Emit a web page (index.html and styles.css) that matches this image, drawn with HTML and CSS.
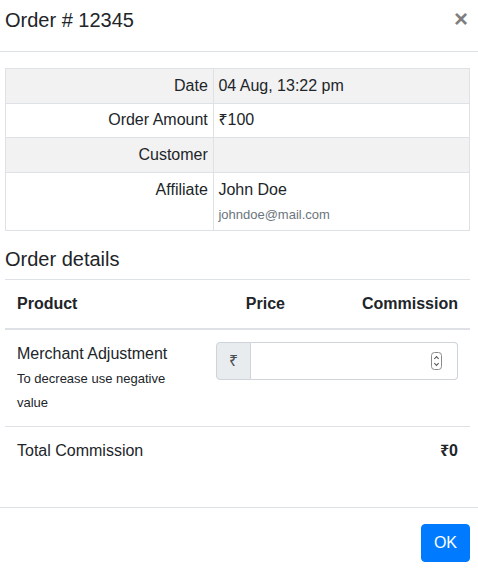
FILE: index.html
```html
<!DOCTYPE html>
<html>
<head>
<meta charset="utf-8">
<link rel="stylesheet" href="styles.css">
</head>
<body>
<div class="modal">
  <div class="modal-header">
    <h5 class="modal-title">Order # 12345</h5>
    <span class="close">×</span>
  </div>
  <div class="modal-body">
    <table class="info-table">
      <tr class="striped"><td class="label">Date</td><td>04 Aug, 13:22 pm</td></tr>
      <tr><td class="label">Order Amount</td><td>₹100</td></tr>
      <tr class="striped"><td class="label">Customer</td><td></td></tr>
      <tr><td class="label">Affiliate</td><td><div>John Doe</div><div><small class="muted">johndoe@mail.com</small></div></td></tr>
    </table>
    <h5 class="section-title">Order details</h5>
    <table class="details-table">
      <colgroup><col class="c1"><col class="c2"><col class="c3"></colgroup>
      <thead>
        <tr><th class="left">Product</th><th class="right">Price</th><th class="right">Commission</th></tr>
      </thead>
      <tbody>
        <tr>
          <td class="top"><div>Merchant Adjustment</div><div><small>To decrease use negative value</small></div></td>
          <td colspan="2" class="top">
            <div class="input-group">
              <span class="prepend">₹</span>
              <div class="field">
                <svg class="spinner" width="11" height="18" viewBox="0 0 11 18"><rect x="0.5" y="0.5" width="10" height="17" rx="3" fill="#fff" stroke="#8a8a8a"/><path d="M3.3 7 L5.5 4.6 L7.7 7" fill="none" stroke="#555" stroke-width="1.1"/><path d="M3.3 11 L5.5 13.4 L7.7 11" fill="none" stroke="#555" stroke-width="1.1"/></svg>
              </div>
            </div>
          </td>
        </tr>
        <tr>
          <td>Total Commission</td>
          <td colspan="2" class="right bold">₹0</td>
        </tr>
      </tbody>
    </table>
  </div>
  <div class="modal-footer">
    <button class="btn-ok">OK</button>
  </div>
</div>
</body>
</html>
```
FILE: styles.css
```css
html, body {
  margin: 0;
  padding: 0;
  background: #fff;
}
body {
  font-family: "Liberation Sans", "Noto Sans", "DejaVu Sans", sans-serif;
  font-size: 16px;
  line-height: 24px;
  color: #212529;
}
.modal-header {
  display: flex;
  justify-content: space-between;
  align-items: flex-start;
  padding: 5px 10px 16px 5px;
  border-bottom: 1px solid #dee2e6;
}
.modal-title {
  margin: 0;
  font-size: 20px;
  line-height: 30px;
  font-weight: 500;
}
.close {
  font-size: 24px;
  font-weight: 700;
  line-height: 28px;
  color: #000;
  opacity: 0.5;
}
.modal-body {
  padding: 16px 8px 16px 5px;
}
.info-table {
  width: 100%;
  border-collapse: collapse;
  border: 1px solid #dee2e6;
  margin-bottom: 16px;
}
.info-table td {
  border: 1px solid #dee2e6;
  padding: 4.8px;
  vertical-align: top;
}
.info-table .label {
  width: 197px;
  text-align: right;
}
.info-table .striped td {
  background: #f2f2f2;
}
small {
  font-size: 13px;
  line-height: 1;
}
.muted {
  color: #6c757d;
}
.section-title {
  margin: 0 0 8px;
  font-size: 20px;
  line-height: 24px;
  font-weight: 500;
}
.details-table {
  width: 100%;
  border-collapse: collapse;
  table-layout: fixed;
  margin-bottom: 16px;
}
.details-table .c1 { width: 199px; }
.details-table .c2 { width: 93px; }
.details-table th,
.details-table td {
  padding: 12px;
  border-top: 1px solid #dee2e6;
  vertical-align: middle;
}
.details-table td.top {
  vertical-align: top;
}
.details-table thead th {
  border-bottom: 2px solid #dee2e6;
  font-weight: 700;
}
.left { text-align: left; }
.right { text-align: right; }
.bold { font-weight: 700; }
.input-group {
  display: flex;
  height: 38px;
}
.prepend {
  width: 35px;
  box-sizing: border-box;
  display: flex;
  align-items: center;
  justify-content: center;
  background: #e9ecef;
  border: 1px solid #ced4da;
  border-radius: 4px 0 0 4px;
  color: #495057;
  font-size: 16px;
}
.field {
  flex: 1;
  display: flex;
  align-items: center;
  justify-content: flex-end;
  border: 1px solid #ced4da;
  border-left: 0;
  border-radius: 0 4px 4px 0;
  padding-right: 15px;
}
.spinner {
  display: block;
}
.modal-footer {
  display: flex;
  justify-content: flex-end;
  border-top: 1px solid #dee2e6;
  padding: 16px 8px 12px;
}
.btn-ok {
  font-family: inherit;
  font-size: 16px;
  line-height: 24px;
  padding: 6px 12px;
  color: #fff;
  background: #007bff;
  border: 1px solid #007bff;
  border-radius: 4px;
}
```
